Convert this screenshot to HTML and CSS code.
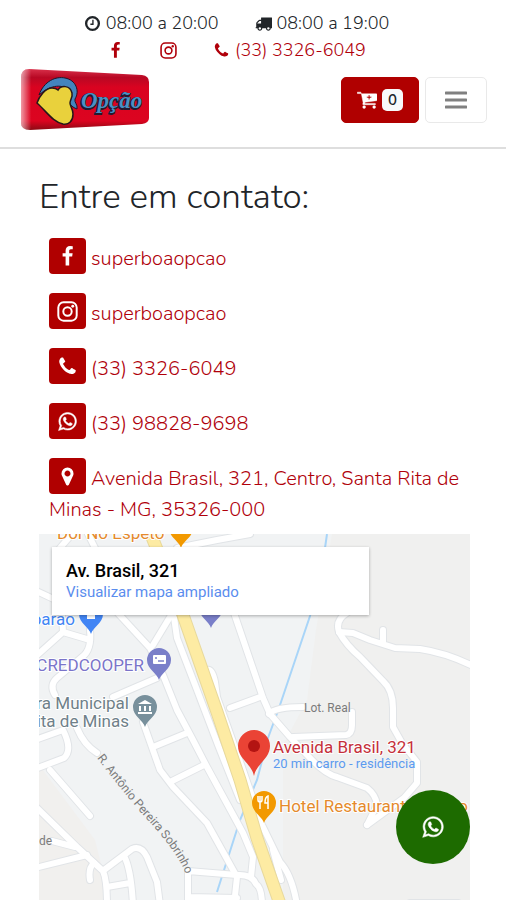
FILE: index.html
```html
<!DOCTYPE html>
<html lang="pt-BR">
<head>
    <meta charset="UTF-8">
    <meta name="viewport" content="width=device-width, initial-scale=1.0">
    <title>Opção - Contato</title>
    <link rel="stylesheet" href="styles.css">
</head>
<body>
    <!-- Icons -->
    <svg class="sprite" aria-hidden="true">
        <symbol id="i-clock" viewBox="0 0 16 16">
            <circle cx="8" cy="8" r="6" fill="none" stroke="currentColor" stroke-width="2.2"/>
            <path d="M8.4 4.5v4.2H6" fill="none" stroke="currentColor" stroke-width="1.3"/>
        </symbol>
        <symbol id="i-truck" viewBox="0 0 1792 1792">
            <path fill="currentColor" d="M640 1408q0-52-38-90t-90-38-90 38-38 90 38 90 90 38 90-38 38-90zm-384-512h384v-256h-158q-13 0-22 9l-195 195q-9 9-9 22v30zm1280 512q0-52-38-90t-90-38-90 38-38 90 38 90 90 38 90-38 38-90zm256-1088v1024q0 15-4 26.5t-13.5 18.5-16.5 11.5-23.5 6-22.5 2-25.5 0-22.5-.5q0 106-75 181t-181 75-181-75-75-181h-384q0 106-75 181t-181 75-181-75-75-181h-64q-3 0-22.5.5t-25.5 0-22.5-2-23.5-6-16.5-11.5-13.5-18.5-4-26.5q0-26 19-45t45-19v-320q0-8-.5-35t0-38 2.5-34.5 6.5-37 14-30.5 22.5-30l198-198q19-19 50.5-32t58.5-13h160v-192q0-26 19-45t45-19h1024q26 0 45 19t19 45z"/>
        </symbol>
        <symbol id="i-facebook" viewBox="0 0 1792 1792">
            <path fill="currentColor" d="M1343 12v264h-157q-86 0-116 36t-30 108v189h293l-39 296h-254v759h-306v-759h-255v-296h255v-218q0-186 104-288.500t277-102.500q147 0 228 12z"/>
        </symbol>
        <symbol id="i-instagram" viewBox="0 0 16 16">
            <rect x="1" y="1" width="14" height="14" rx="4" fill="none" stroke="currentColor" stroke-width="1.5"/>
            <circle cx="8" cy="8" r="3.2" fill="none" stroke="currentColor" stroke-width="1.5"/>
            <circle cx="12" cy="4" r="1.1" fill="currentColor"/>
        </symbol>
        <symbol id="i-phone" viewBox="0 0 1792 1792">
            <path fill="currentColor" d="M1600 1240q0 27-10 70.500t-21 68.500q-21 50-122 106-94 51-186 51-27 0-53-3.500t-57.500-12.500-47-14.500-55.500-20.500-49-18q-98-35-175-83-127-79-264-216t-216-264q-48-77-83-175-3-9-18-49t-20.500-55.500-14.500-47-12.500-57.500-3.500-53q0-92 51-186 56-101 106-122 25-11 68.500-21t70.500-10q14 0 21 3 18 6 53 76 11 19 30 54t35 63.500 31 53.500q3 4 17.500 25t21.500 35.500 7 28.500q0 20-28.500 50t-62 55-62 53-28.500 46q0 9 5 22.500t8.500 20.500 14 24 11.500 19q76 137 174 235t235 174q2 1 19 11.500t24 14 20.500 8.500 22.500 5q18 0 46-28.500t53-62 55-62 50-28.500q14 0 28.500 7t35.500 21.500 25 17.500q25 15 53.500 31t63.500 35 54 30q70 35 76 53 3 7 3 21z"/>
        </symbol>
        <symbol id="i-whatsapp" viewBox="0 0 1792 1792">
            <path fill="currentColor" stroke="currentColor" stroke-width="40" d="M1113 974q13 0 97.500 44t89.500 53q2 5 2 15 0 33-17 76-16 39-71 65.500t-102 26.500q-57 0-190-62-98-45-170-118t-148-185q-72-107-71-194v-8q3-91 74-158 24-22 52-22 6 0 18 1.500t19 1.500q19 0 26.500 6.500t15.500 27.500q8 20 33 88t25 75q0 21-34.500 57.500t-34.500 46.500q0 7 5 15 34 73 102 137 56 53 151 101 12 7 22 7 15 0 54-48.500t52-48.500zm-203 530q127 0 243.500-50t200.500-134 134-200.500 50-243.500-50-243.500-134-200.500-200.500-134-243.500-50-243.500 50-200.500 134-134 200.500-50 243.500q0 203 120 368l-79 233 242-77q158 104 345 104zm0-1382q153 0 292.500 60t240.500 161 161 240.500 60 292.500-60 292.500-161 240.500-240.500 161-292.500 60q-195 0-365-94l-417 134 136-405q-108-178-108-389 0-153 60-292.500t161-240.500 240.500-161 292.500-60z"/>
        </symbol>
        <symbol id="i-marker" viewBox="0 0 1792 1792">
            <path fill="currentColor" d="M1152 640q0-106-75-181t-181-75-181 75-75 181 75 181 181 75 181-75 75-181zm256 0q0 109-33 179l-364 774q-16 33-47.500 52t-67.500 19-67.500-19-46.500-52l-365-774q-33-70-33-179 0-212 150-362t362-150 362 150 150 362z"/>
        </symbol>
        <symbol id="i-cart" viewBox="0 0 1792 1792">
            <path fill="currentColor" d="M64 192H350L380 340H1728Q1792 340 1792 400V900Q1790 950 1740 960L700 1090L710 1200H1620Q1664 1210 1664 1260T1620 1320H560Q500 1310 520 1230L550 1150L390 320H64Q0 310 0 256T64 192zM768 1530a128 128 0 1 1-256 0 128 128 0 0 1 256 0zM1664 1530a128 128 0 1 1-256 0 128 128 0 0 1 256 0zM1020 450V590H880V710H1020V850H1150V710H1290V590H1150V450z" fill-rule="evenodd" stroke="currentColor" stroke-width="40"/>
        </symbol>
        <symbol id="i-bars" viewBox="0 0 22 18">
            <path d="M1 2h20M1 9h20M1 16h20" stroke="currentColor" stroke-width="3" stroke-linecap="round"/>
        </symbol>
    </svg>

    <header class="header">
        <div class="topbar hours">
            <span class="topbar-item"><svg class="icon"><use href="#i-clock"/></svg>08:00 a 20:00</span>
            <span class="topbar-item"><svg class="icon"><use href="#i-truck"/></svg>08:00 a 19:00</span>
        </div>
        <div class="topbar social">
            <a href="#facebook" aria-label="Facebook"><svg class="icon"><use href="#i-facebook"/></svg></a>
            <a href="#instagram" aria-label="Instagram"><svg class="icon"><use href="#i-instagram"/></svg></a>
            <a class="topbar-item" href="tel:3333266049"><svg class="icon"><use href="#i-phone"/></svg>(33) 3326-6049</a>
        </div>
        <div class="navbar">
            <a class="brand" href="#inicio" aria-label="Opção">
                <svg class="logo" viewBox="0 0 130 64">
                    <defs>
                        <linearGradient id="red" x1="0" y1="0" x2="0" y2="1">
                            <stop offset="0" stop-color="#d8304a"/>
                            <stop offset=".14" stop-color="#b80824"/>
                            <stop offset=".3" stop-color="#d90320"/>
                            <stop offset=".85" stop-color="#dc0420"/>
                            <stop offset="1" stop-color="#8c0a14"/>
                        </linearGradient>
                        <linearGradient id="shine">
                            <stop offset="0" stop-color="#fff" stop-opacity=".6"/>
                            <stop offset=".08" stop-color="#fff" stop-opacity="0"/>
                        </linearGradient>
                    </defs>
                    <path d="M9 1 L122 7 Q129 8 129 14 V50 Q129 55 122 56 L10 62 Q1 62 1 54 V10 Q1 1 9 1z" fill="url(#red)"/>
                    <path d="M9 1 L122 7 Q129 8 129 14 V50 Q129 55 122 56 L10 62 Q1 62 1 54 V10 Q1 1 9 1z" fill="url(#shine)"/>
                    <path d="M19 27 C24 13 36 8 45 10 C56 12 60 23 55 31 C54 35 58 36 57 41 C48 38 47 30 48 23 C44 16 31 16 19 27z" fill="#4384bd" stroke="#221428" stroke-width="1"/>
                    <path d="M17 35 C19 29 25 20 32 20 C35 20 37 21 38 22 C41 17 50 17 52 25 C53 29 50 32 50 35 C50 38 53 41 53 46 C53 53 49 57 43 56 C33 54 27 44 17 35z" fill="#e9d13c" stroke="#251719" stroke-width="1.5"/>
                    <text class="logo-shadow" x="60" y="41">Opção</text>
                    <text class="logo-text" x="61" y="40">Opção</text>
                </svg>
            </a>
            <div class="actions">
                <button class="cart" type="button" aria-label="Carrinho">
                    <svg class="cart-icon"><use href="#i-cart"/></svg>
                    <span class="badge">0</span>
                </button>
                <button class="menu" type="button" aria-label="Menu">
                    <svg class="menu-icon"><use href="#i-bars"/></svg>
                </button>
            </div>
        </div>
    </header>

    <main class="contact">
        <h1>Entre em contato:</h1>
        <ul class="contact-list">
            <li><a href="#facebook"><span class="tile"><svg><use href="#i-facebook"/></svg></span> superboaopcao</a></li>
            <li><a href="#instagram"><span class="tile"><svg><use href="#i-instagram"/></svg></span> superboaopcao</a></li>
            <li><a href="tel:3333266049"><span class="tile"><svg><use href="#i-phone"/></svg></span> (33) 3326-6049</a></li>
            <li><a href="#whatsapp"><span class="tile"><svg><use href="#i-whatsapp"/></svg></span> (33) 98828-9698</a></li>
            <li><a href="#mapa"><span class="tile"><svg><use href="#i-marker"/></svg></span> Avenida Brasil, 321, Centro, Santa Rita de Minas - MG, 35326-000</a></li>
        </ul>

        <div class="map" id="mapa">
            <svg class="map-canvas" viewBox="39 534 431 366" preserveAspectRatio="xMinYMin slice">
                <defs>
                    <path id="pin" d="M0 0 C-2 -7 -12 -11 -12 -20 A12 12 0 0 1 12 -20 C12 -11 2 -7 0 0z"/>
                    <path id="rua" d="M97 758 Q119 787 143 815 Q179 853 187 877"/>
                    <g id="roads" fill="none" stroke-linejoin="round" stroke-linecap="round">
                        <path d="M177 548 L217 540 L250 534"/>
                        <path d="M60 548 L72 534 M95 548 L88 534"/>
                        <path d="M30 588 L60 602"/>
                        <path d="M233 610 L263 698 L270 714 L290 737 L310 758 Q325 774 337 777 L367 788 Q376 795 377 805 L367 825"/>
                        <path d="M173 610 L177 638 L197 690 L218 745 L240 800"/>
                        <path d="M207 670 Q212 668 215 682 L217 697 L243 770 L262 825 L280 862 Q292 875 297 905"/>
                        <path d="M230 708 L260 697"/>
                        <path d="M115 610 L150 648 L163 675 L177 710 L193 740 L207 767 L243 833 L253 857 L251 877"/>
                        <path d="M173 612 L153 645"/>
                        <path d="M35 657 L63 632 L62 615 M63 632 L90 640"/>
                        <path d="M90 630 Q92 650 82 657 L57 678 Q49 685 55 695"/>
                        <path d="M157 678 L113 697"/>
                        <path d="M77 728 Q84 745 97 753"/>
                        <path d="M143 722 L160 770 L173 787 L207 823 L237 877 L234 905"/>
                        <path d="M153 747 L187 733 M170 782 L204 765"/>
                        <path d="M188 905 L188 871 L237 875 Q252 874 256 884 Q262 888 262 905 M188 897 L237 898"/>
                        <path d="M63 730 Q73 750 64 758 L35 769 M35 740 L63 730 M50 770 L90 816"/>
                        <path d="M35 806 L77 847 L103 871 Q107 880 107 905"/>
                        <path d="M52 841 L75 847 M35 868 L87 855 M94 863 Q88 868 90 880"/>
                        <path d="M104 870 L132 849 Q141 845 147 857 L157 882 L160 905 M124 856 Q131 868 133 905 M107 887 L130 883"/>
                        <path d="M293 737 L346 735 Q352 734 352 725 V712"/>
                        <path d="M269 714 Q275 707 303 707"/>
                        <path d="M347 613 Q335 620 339 632 Q346 645 360 657 L383 681 Q393 690 393 708 V727 L402 743 L417 762 V783 L404 798 L367 825"/>
                        <path d="M339 632 L353 633 L370 640 L395 648 L420 649 Q447 653 475 667 M383 630 V642"/>
                        <path d="M273 850 L281 880"/>
                        <path d="M410 903 H458"/>
                    </g>
                </defs>
                <rect x="39" y="534" width="431" height="366" fill="#f0f0ef"/>
                <path d="M39 534 H332 L316 630 L307 700 L283 745 V900 H39z" fill="#f1f3f4"/>
                <path d="M39 765 L95 840 L110 900 H39z" fill="#f1f0ee"/>
                <path d="M327 534 L325 548 L310 616 L279 708 L268 738 L257 780 L240 820 L217 892" fill="none" stroke="#a9d5f8" stroke-width="2"/>
                <use href="#roads" stroke="#e1e4e7" stroke-width="8"/>
                <use href="#roads" stroke="#fff" stroke-width="6"/>
                <path d="M150 532 L182 612 L217 712 L240 780 L257 838 L280 904" fill="none" stroke="#e8d99c" stroke-width="13"/>
                <path d="M150 532 L182 612 L217 712 L240 780 L257 838 L280 904" fill="none" stroke="#fdeba3" stroke-width="11"/>

                <use href="#pin" transform="translate(181 548)" fill="#f29900"/>
                <text class="poi orange" x="57" y="539">Dol No Espeto</text>

                <use href="#pin" transform="translate(91 634)" fill="#4285f4"/>
                <path d="M87 612 h8 v7 h-8z" fill="#fff"/>
                <text class="poi blue" x="75" y="625" text-anchor="end">Baparao</text>

                <use href="#pin" transform="translate(211 628)" fill="#7a7fc9"/>

                <use href="#pin" transform="translate(159 680)" fill="#7a7fc9"/>
                <rect x="153" y="655" width="13" height="9" rx="1" fill="#fff"/>
                <path d="M155 658h2M158 661h6" stroke="#7a7fc9" stroke-width="1.5"/>
                <text class="poi purple" x="144" y="671" text-anchor="end">CREDCOOPER</text>

                <use href="#pin" transform="translate(145 727)" fill="#78909c"/>
                <path d="M138 704l7-4 7 4zM139 706h2v5h-2zM144 706h2v5h-2zM149 706h2v5h-2zM138 712h14v2h-14z" fill="#fff"/>
                <text class="poi gray" x="129" y="709" text-anchor="end">Prefeitura Municipal</text>
                <text class="poi gray" x="129" y="727" text-anchor="end">Santa Rita de Minas</text>

                <text class="street" x="304" y="712">Lot. Real</text>
                <text class="street" x="39" y="845">de</text>
                <text class="street"><textPath href="#rua">R. Antônio Pereira Sobrinho</textPath></text>

                <use href="#pin" transform="translate(264 823)" fill="#f29900"/>
                <path d="M258 796v4q0 2 2 2v7M262 796v4q0 2-2 2M260 796v6M268 809v-13q-3 1-3 7h3" fill="none" stroke="#fff" stroke-width="1.5"/>
                <text class="poi orange" x="279" y="812">Hotel Restaurante Bonito</text>

                <path d="M254 776 C252 764 238 759 238 746 A16 16 0 0 1 270 746 C270 759 256 764 254 776z" fill="#ea4335"/>
                <circle cx="254" cy="746" r="6" fill="#b31412"/>
                <text class="poi place" x="273" y="753">Avenida Brasil, 321</text>
                <text class="trip" x="273" y="768">20 min carro - residência</text>
            </svg>
            <div class="map-card">
                <strong>Av. Brasil, 321</strong>
                <a href="#mapa">Visualizar mapa ampliado</a>
            </div>
        </div>
    </main>

    <a class="whatsapp" href="#whatsapp" aria-label="WhatsApp"><svg><use href="#i-whatsapp"/></svg></a>
</body>
</html>
```

FILE: styles.css
```css
* {
    box-sizing: border-box;
}
body {
    margin: 0;
    min-height: 100vh;
    display: flex;
    flex-direction: column;
    font-family: Nunito, Lato, sans-serif;
    font-size: 18px;
    font-weight: 300;
    color: #212529;
    background-color: #fff;
}
a {
    color: #b0000a;
    text-decoration: none;
}
.sprite {
    display: none;
}

/* Header */
.header {
    padding: 10px 19px 15px 20px;
    border-bottom: 2px solid #dedede;
}
.topbar {
    display: flex;
    justify-content: center;
    align-items: center;
    padding-right: 34px;
    line-height: 27px;
}
.hours {
    gap: 36px;
}
.social {
    gap: 36px;
}
.topbar-item {
    display: flex;
    align-items: center;
    gap: 5px;
}
.icon {
    display: block;
    width: 17px;
    height: 17px;
}
.navbar {
    display: flex;
    justify-content: space-between;
    align-items: center;
    padding-top: 4px;
}
.logo {
    display: block;
    width: 130px;
    height: 64px;
}
.logo-text, .logo-shadow {
    font-family: "Liberation Serif", serif;
    font-size: 23px;
    font-weight: bold;
    font-style: italic;
}
.logo-text {
    fill: #4a90c4;
}
.logo-shadow {
    fill: #231a30;
    stroke: #231a30;
    stroke-width: 2px;
}
.actions {
    display: flex;
    gap: 6px;
}
.cart, .menu {
    display: flex;
    align-items: center;
    justify-content: center;
    height: 46px;
    padding: 0 15px;
    border-radius: 5px;
    font-family: inherit;
}
.cart {
    gap: 5px;
    border: 1px solid #b00000;
    background-color: #b00000;
    color: #fff;
}
.cart-icon {
    width: 20px;
    height: 20px;
}
.badge {
    padding: 0 6px;
    border-radius: 5px;
    background-color: #f8f9fa;
    color: #212529;
    font-size: 15px;
    font-weight: 600;
    line-height: 22px;
}
.menu {
    padding: 0 19px;
    border: 1px solid #e9e9e9;
    background-color: #fff;
    color: #808080;
}
.menu-icon {
    width: 22px;
    height: 18px;
}

/* Contact */
.contact {
    flex: 1;
    display: flex;
    flex-direction: column;
    padding: 26px 36px 0 39px;
}
h1 {
    margin: 0 0 10px;
    font-size: 35px;
    font-weight: 300;
    line-height: 43px;
}
.contact-list {
    margin: 0;
    padding: 0;
    list-style: none;
    font-size: 20px;
    line-height: 31px;
}
.contact-list li {
    padding: 10px 4px 9px 10px;
}
.tile {
    display: inline-flex;
    align-items: center;
    justify-content: center;
    width: 37px;
    height: 36px;
    border-radius: 4px;
    background-color: #b00000;
    color: #fff;
    vertical-align: -2px;
}
.tile svg {
    width: 21px;
    height: 21px;
}

/* Map */
.map {
    position: relative;
    flex: 1;
    min-height: 366px;
    overflow: hidden;
}
.map-canvas {
    position: absolute;
    width: 100%;
    height: 100%;
}
.map-card {
    position: absolute;
    top: 13px;
    left: 13px;
    width: 317px;
    padding: 12px 14px;
    background-color: #fff;
    box-shadow: 0 1px 3px rgba(0, 0, 0, 0.3);
    font-family: Roboto, sans-serif;
    font-weight: 400;
}
.map-card strong {
    display: block;
    font-size: 18px;
    font-weight: 500;
    line-height: 23px;
    color: #000;
}
.map-card a {
    display: block;
    font-size: 15px;
    line-height: 21px;
    color: #5a8dee;
}
.poi {
    font-family: Roboto, sans-serif;
    font-size: 17px;
    font-weight: 400;
    stroke: #fff;
    stroke-width: 2px;
    paint-order: stroke;
}
.orange {
    fill: #e58a2c;
}
.blue {
    fill: #4285f4;
}
.purple {
    fill: #7b74c9;
}
.gray {
    fill: #6f8089;
}
.place {
    fill: #c5303a;
}
.trip {
    font-family: Roboto, sans-serif;
    font-size: 13px;
    font-weight: 400;
    fill: #5c9bf0;
}
.street {
    font-family: Roboto, sans-serif;
    font-size: 12px;
    font-weight: 400;
    fill: #7b7b7b;
}

.whatsapp {
    position: fixed;
    right: 36px;
    bottom: 36px;
    display: flex;
    align-items: center;
    justify-content: center;
    width: 74px;
    height: 74px;
    border-radius: 50%;
    background-color: #1d6b00;
    color: #fff;
}
.whatsapp svg {
    width: 24px;
    height: 24px;
}
```
